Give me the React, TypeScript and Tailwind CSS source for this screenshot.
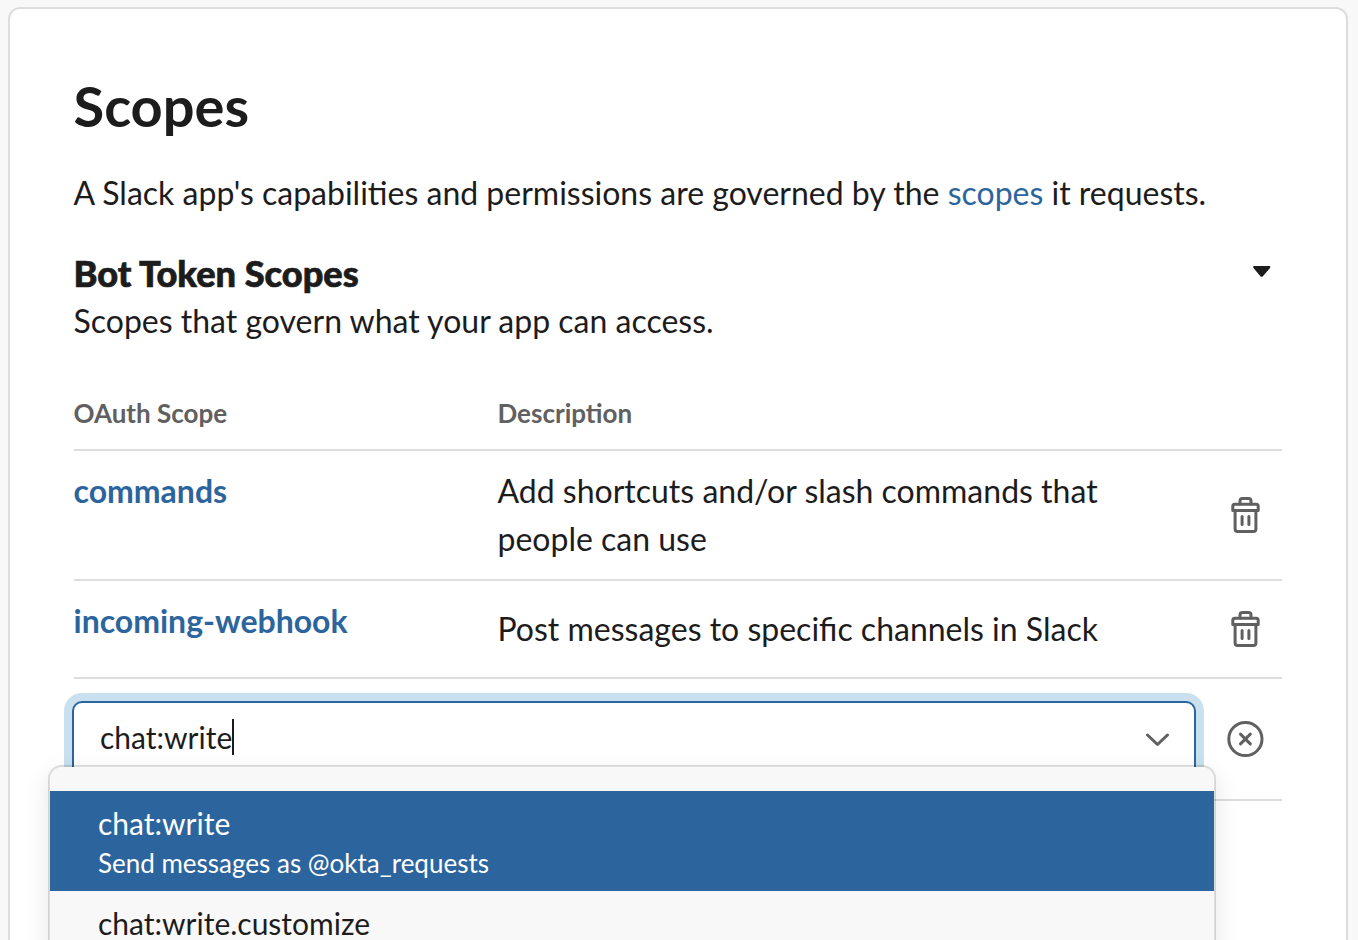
import React from "react";

function TrashIcon() {
  return (
    <svg width="30" height="36" viewBox="0.5 0 30 36" fill="none" stroke="#616061" strokeWidth="3" strokeLinecap="round" strokeLinejoin="round" className="block">
      <path d="M9.5 7V4A2.5 2.5 0 0 1 12 1.500h6A2.500 2.500 0 0 1 20.500 4v3" />
      <path d="M4.300 7.300h21.400a2 2 0 0 1 2 2v4.200H2.300V9.300a2 2 0 0 1 2-2z" />
      <path d="M4.600 14v18a2.500 2.500 0 0 0 2.500 2.500h15.800a2.500 2.500 0 0 0 2.500-2.500V14" />
      <path d="M11.600 19.500V27.500M18.400 19.500V27.500" />
    </svg>
  );
}

const scopes = [
  { name: "commands", description: "Add shortcuts and/or slash commands that people can use", height: "h-[130px]", pad: "pt-4" },
  { name: "incoming-webhook", description: "Post messages to specific channels in Slack", height: "h-[98px]", pad: "pt-6" },
];

export default function App() {
  return (
    <div className="h-[940px] w-[1358px] overflow-hidden bg-[#f8f8f8] pt-[7px] pl-2 font-['Lato','Liberation_Sans',sans-serif] text-[32px] leading-[48px] text-[#1d1c1d]">
      <section className="relative h-[1000px] w-[1340px] rounded-[12px] border-2 border-[#dddddd] bg-white pt-16 pr-16 pl-[63.5px]">
        <h1 className="text-[56px] leading-[66px] font-bold">Scopes</h1>
        <p className="mt-[30px] whitespace-nowrap">
          A Slack app's capabilities and permissions are governed by the <a className="text-[#2c659d]">scopes</a> it requests.
        </p>
        <div className="mt-8 flex h-[48px] items-center justify-between">
          <h2 className="text-[36.2px] leading-[48px] font-black [-webkit-text-stroke:0.7px_#1d1c1d]">Bot Token Scopes</h2>
          <svg width="18" height="12" viewBox="0 0 18 12" className="mr-[11px] mb-[2px]">
            <path d="M1.300 0h14.800q1.900 0 .900 2L9.900 10.200q-1.200 1.300-2.500 0L.500 2Q-.6 0 1.300 0z" fill="#1d1c1d" />
          </svg>
        </div>
        <p>Scopes that govern what your app can access.</p>

        <div className="mt-[44px] ml-[0.5px] flex h-[62px] border-b-2 border-[#dddddd] text-[26px] font-bold text-[#616061]">
          <div className="-ml-[0.5px] w-[424px]">OAuth Scope</div>
          <div>Description</div>
        </div>
        {scopes.map((s) => (
          <div key={s.name} className={`ml-[0.5px] flex border-b-2 border-[#dddddd] ${s.height}`}>
            <a className="-ml-[0.5px] w-[424px] pt-4 font-bold text-[#2c659d]">{s.name}</a>
            <div className={`w-[640px] ${s.pad}`}>{s.description}</div>
            <div className="ml-auto flex items-center pr-[21px]">
              <TrashIcon />
            </div>
          </div>
        ))}
        <div className="ml-[0.5px] flex h-[122px] border-b-2 border-[#dddddd] pt-[22px]">
          <div className="-ml-[2px] flex h-[76px] w-[1124px] items-center rounded-[10px] border-2 border-[#2c659d] bg-white pr-6 pb-1 pl-[26px] shadow-[0_0_0_8px_#c9e0ef]">
            <span className="text-[30px]">chat:write</span>
            <span className="h-9 w-[2px] bg-[#1d1c1d]" />
            <svg width="25" height="14" viewBox="0 0 25 14" fill="none" stroke="#616061" strokeWidth="3" strokeLinecap="round" strokeLinejoin="round" className="mt-[6px] ml-auto">
              <path d="M2.500 2l10 9.500L22.500 2" />
            </svg>
          </div>
          <svg width="38" height="38" viewBox="0 0 38 38" fill="none" stroke="#616061" strokeWidth="3" strokeLinecap="round" className="mt-[19px] ml-[30px]">
            <circle cx="19.400" cy="19" r="16.600" />
            <path d="M14.500 14.100l9.800 9.800M24.300 14.100l-9.800 9.800" />
          </svg>
        </div>

        <div className="absolute top-[756px] left-[38px] h-[220px] w-[1168px] rounded-[14px] border-2 border-black/13 bg-[#f8f8f8] bg-clip-padding pt-6 text-[30px] shadow-[0_8px_24px_rgba(0,0,0,0.1)]">
          <div className="h-[100px] bg-[#2c659d] px-12 pt-3 text-white">
            <div className="leading-[40px]">chat:write</div>
            <div className="mt-px text-[26px] leading-[38px]">Send messages as @okta_requests</div>
          </div>
          <div className="px-12 pt-3 leading-[40px]">chat:write.customize</div>
        </div>
      </section>
    </div>
  );
}
